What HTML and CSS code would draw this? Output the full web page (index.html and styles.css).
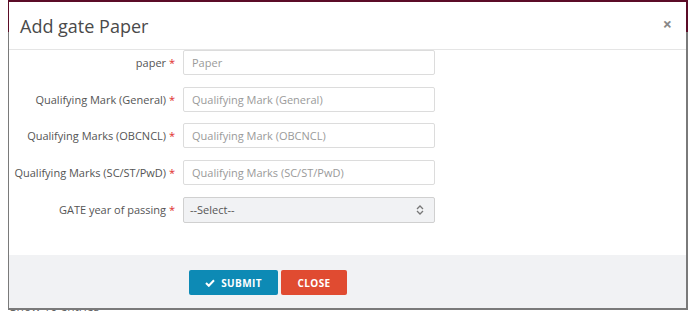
FILE: index.html
```html
<!DOCTYPE html>
<html lang="en">
<head>
  <meta charset="UTF-8">
  <title>Add gate Paper</title>
  <link rel="stylesheet" href="styles.css">
</head>
<body>
<!-- page behind the modal -->
<div class="page">
  <div class="page-info">Show 10 entries</div>
</div>

<!-- modal overlay -->
<div class="backdrop">
  <div class="modal">
    <div class="modal-header">
      <h4 class="modal-title">Add gate Paper</h4>
      <span class="modal-close">&times;</span>
    </div>
    <div class="modal-body">
      <div class="form-row">
        <label class="form-label">paper <span class="req">*</span></label>
        <input class="form-input" type="text" placeholder="Paper">
      </div>
      <div class="form-row">
        <label class="form-label">Qualifying Mark (General) <span class="req">*</span></label>
        <input class="form-input" type="text" placeholder="Qualifying Mark (General)">
      </div>
      <div class="form-row">
        <label class="form-label">Qualifying Marks (OBCNCL) <span class="req">*</span></label>
        <input class="form-input" type="text" placeholder="Qualifying Mark (OBCNCL)">
      </div>
      <div class="form-row">
        <label class="form-label">Qualifying Marks (SC/ST/PwD) <span class="req">*</span></label>
        <input class="form-input" type="text" placeholder="Qualifying Marks (SC/ST/PwD)">
      </div>
      <div class="form-row">
        <label class="form-label">GATE year of passing <span class="req">*</span></label>
        <div class="form-select">
          <span>--Select--</span>
          <svg width="8" height="10" viewBox="0 0 8 10">
            <path d="M1 4 L4 1 L7 4 M1 6 L4 9 L7 6" fill="none" stroke="#777" stroke-width="1.3"></path>
          </svg>
        </div>
      </div>
    </div>
    <div class="modal-footer">
      <button class="btn btn-submit">
        <svg width="10" height="8" viewBox="0 0 10 8">
          <path d="M1 4 L3.8 6.8 L9 1.2" fill="none" stroke="#fff" stroke-width="2"></path>
        </svg>
        SUBMIT
      </button>
      <button class="btn btn-close">CLOSE</button>
    </div>
  </div>
</div>
</body>
</html>
```

FILE: styles.css
```css
body {
  margin: 0;
  background: #fff;
  font-family: "Open Sans", "Liberation Sans", sans-serif;
}
/* 页面内容（被弹窗遮住） */
.page {
  padding: 298px 10px 0 10px;
}
.page-info {
  font-size: 12px;
  color: #666;
}
/* 遮罩层 */
.backdrop {
  position: absolute;
  top: 0;
  left: 8px;
  width: 680px;
  height: 310px;
  background: linear-gradient(#5b0c27 0, #5b0c27 32px, #7a7a7a 32px);
  box-sizing: border-box;
  padding: 2px 2px 2px 1px;
}
.modal {
  background: #fff;
  height: 100%;
  display: flex;
  flex-direction: column;
}
.modal-header {
  height: 47px;
  border-bottom: 1px solid #e5e5e5;
  display: flex;
  align-items: center;
  justify-content: space-between;
  padding: 0 14px 0 11px;
}
.modal-title {
  margin: 0;
  font-size: 18px;
  font-weight: normal;
  color: #4a4a4a;
}
.modal-close {
  font-size: 16px;
  font-weight: bold;
  color: #888;
  margin-top: -4px;
}
.modal-body {
  flex: 1;
  display: flex;
  flex-direction: column;
  gap: 11.7px;
}
.form-row {
  display: flex;
  align-items: center;
}
.form-label {
  width: 174px;
  text-align: right;
  font-size: 11px;
  color: #555;
  padding-right: 8px;
  box-sizing: border-box;
  white-space: nowrap;
}
.req {
  color: #e02b2b;
}
.form-input {
  width: 252px;
  height: 25px;
  box-sizing: border-box;
  border: 1px solid #dcdcdc;
  border-radius: 2px;
  padding: 0 8px;
  font-family: inherit;
  font-size: 11px;
  color: #555;
  outline: none;
}
.form-input::placeholder {
  color: #9a9a9a;
}
.form-select {
  width: 252px;
  height: 26px;
  box-sizing: border-box;
  border: 1px solid #d0d0d0;
  border-radius: 2px;
  background: #f1f2f4;
  padding: 0 10px 0 6px;
  display: flex;
  align-items: center;
  justify-content: space-between;
  font-size: 11px;
  color: #555;
}
.modal-footer {
  height: 53px;
  background: #f1f2f4;
  display: flex;
  gap: 3px;
  padding: 15px 0 0 180px;
  box-sizing: border-box;
}
.btn {
  height: 25px;
  border: none;
  border-radius: 2px;
  color: #fff;
  font-family: inherit;
  font-weight: bold;
  font-size: 10px;
  letter-spacing: 0.4px;
  display: flex;
  align-items: center;
  justify-content: center;
  gap: 6px;
}
.btn-submit {
  width: 89px;
  background: #0d8ab5;
}
.btn-close {
  width: 66px;
  background: #e04b31;
}
```
